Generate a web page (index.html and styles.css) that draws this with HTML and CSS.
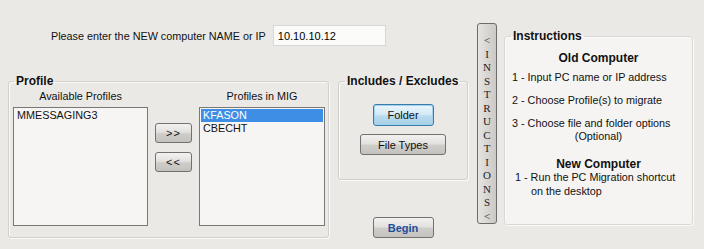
FILE: index.html
```html
<!DOCTYPE html>
<html lang="en">
<head>
    <meta charset="UTF-8">
    <title>PC Migration</title>
    <link rel="stylesheet" href="styles.css">
</head>
<body>
    <div class="form">
        <!-- sol taraf -->
        <div class="main">
            <div class="ask">
                <span>Please enter the NEW computer NAME or IP</span>
                <input class="ip" type="text" value="10.10.10.12">
            </div>

            <div class="groups">
                <fieldset class="profile">
                    <legend>Profile</legend>
                    <div class="col avail">
                        <div class="head">Available Profiles</div>
                        <div class="list">
                            <div class="item">MMESSAGING3</div>
                        </div>
                    </div>
                    <div class="moves">
                        <button class="btn small">&gt;&gt;</button>
                        <button class="btn small">&lt;&lt;</button>
                    </div>
                    <div class="col mig">
                        <div class="head">Profiles in MIG</div>
                        <div class="list">
                            <div class="item selected">KFASON</div>
                            <div class="item">CBECHT</div>
                        </div>
                    </div>
                </fieldset>

                <div class="side">
                    <fieldset class="incl">
                        <legend>Includes / Excludes</legend>
                        <button class="btn folder">Folder</button>
                        <button class="btn types">File Types</button>
                    </fieldset>
                    <button class="btn begin">Begin</button>
                </div>
            </div>
        </div>

        <!-- dikey buton -->
        <button class="vbtn">
            <span>&lt;</span><span>I</span><span>N</span><span>S</span><span>T</span><span>R</span><span>U</span><span>C</span><span>T</span><span>I</span><span>O</span><span>N</span><span>S</span><span>&lt;</span>
        </button>

        <!-- talimatlar -->
        <fieldset class="help">
            <legend>Instructions</legend>
            <div class="title">Old Computer</div>
            <div class="line first">1 - Input PC name or IP address</div>
            <div class="line">2 - Choose Profile(s) to migrate</div>
            <div class="line tight">3 - Choose file and folder options</div>
            <div class="opt">(Optional)</div>
            <div class="title second">New Computer</div>
            <div class="line run">1 - Run the PC Migration shortcut</div>
            <div class="line cont">on the desktop</div>
        </fieldset>
    </div>
</body>
</html>
```

FILE: styles.css
```css
body, html {
    margin: 0;
    padding: 0;
    background: #ebe9e6;
    font-family: "Liberation Sans", Arial, sans-serif;
    font-size: 10.8px;
    color: #111;
    overflow: hidden;
}

.form {
    display: flex;
    width: 704px;
    height: 249px;
}

/* Sol alan */
.main {
    width: 461px;
    padding-left: 8px;
    flex: none;
}

.ask {
    display: flex;
    align-items: center;
    margin-top: 25px;
    margin-left: 43px;
    gap: 7px;
}

.ip {
    width: 113px;
    height: 21px;
    box-sizing: border-box;
    border: 1px solid #d9d7d4;
    background: #fbfbfa;
    font-family: inherit;
    font-size: 11px;
    padding: 0 4px;
    margin: 0;
}

.groups {
    display: flex;
    margin-top: 28px;
}

fieldset {
    margin: 0;
    border: 1px solid #d2cfcc;
    border-radius: 3px;
    box-shadow: 1px 1px 0 #fbfaf9, inset 1px 1px 0 #fbfaf9;
}

legend {
    font-weight: bold;
    font-size: 12px;
    padding: 0 2px;
}

/* Profil grubu */
.profile {
    width: 321px;
    height: 164px;
    box-sizing: border-box;
    padding: 0 3px 0 4px;
    display: flex;
}

.profile legend {
    margin-left: 1px;
}

.col {
    display: flex;
    flex-direction: column;
}

.head {
    text-align: center;
    height: 18px;
    line-height: 14px;
    margin-top: 1px;
}

.avail .list {
    width: 135px;
}

.mig .list {
    width: 126px;
}

.list {
    height: 119px;
    box-sizing: border-box;
    border: 1px solid #7a7876;
    background: #f6f5f3;
    padding: 1px;
}

.item {
    height: 13px;
    line-height: 13px;
    padding-left: 2px;
}

.selected {
    background: #3d8ee4;
    color: #fff;
}

.moves {
    width: 51px;
    display: flex;
    flex-direction: column;
    align-items: center;
    padding-top: 35px;
    gap: 9px;
}

/* Butonlar */
.btn {
    box-sizing: border-box;
    border: 1px solid #737170;
    border-radius: 3px;
    background: linear-gradient(#f3f2f1 0%, #e3e1df 45%, #cfcdca 55%, #c4c2bf 100%);
    font-family: inherit;
    font-size: 11px;
    color: #111;
    padding: 0;
    margin: 0;
}

.small {
    width: 37px;
    height: 20px;
    letter-spacing: 1px;
}

.side {
    display: flex;
    flex-direction: column;
    align-items: center;
    margin-left: 9px;
}

.incl {
    width: 130px;
    height: 106px;
    box-sizing: border-box;
    padding: 0;
    display: flex;
    flex-direction: column;
    align-items: center;
}

.incl legend {
    margin-left: 6px;
}

.folder {
    width: 61px;
    height: 22px;
    margin-top: 16px;
    border-color: #3a7ba8;
    background: linear-gradient(#eaf5fb 0%, #d6ebf6 45%, #b9dcee 55%, #a9d0e6 100%);
    box-shadow: inset 0 0 0 1px #9fd2ee;
}

.types {
    width: 86px;
    height: 21px;
    margin-top: 8px;
}

.begin {
    width: 61px;
    height: 21px;
    margin-top: 37px;
    font-weight: bold;
    color: #1a4f9c;
}

/* Dikey buton */
.vbtn {
    flex: none;
    width: 20px;
    height: 201px;
    margin: 23px 0 0 8px;
    padding: 10px 0 0;
    box-sizing: border-box;
    border: 1px solid #6e6c6a;
    border-radius: 3px;
    background: linear-gradient(90deg, #e6e4e2, #cbc8c5);
    display: flex;
    flex-direction: column;
    align-items: center;
    font-family: "Liberation Serif", serif;
    font-size: 11px;
    color: #222;
}

.vbtn span {
    height: 14.1px;
    line-height: 13px;
}

/* Talimatlar */
.help {
    flex: none;
    width: 189px;
    height: 196px;
    box-sizing: border-box;
    margin: 29px 0 0 7px;
    padding: 0 0 0 7px;
    background: #f5f4f2;
    border-color: #dad7d4;
}

.help legend {
    margin-left: -1px;
}

.title {
    font-weight: bold;
    font-size: 12px;
    text-align: center;
    padding-right: 7px;
    margin-top: 8px;
    height: 16px;
}

.second {
    margin-top: 13px;
}

.line {
    margin-top: 5px;
    height: 18px;
    line-height: 18px;
}

.first {
    margin-top: 1px;
}

.tight {
    height: 14px;
    line-height: 14px;
    margin-top: 7px;
}

.opt {
    text-align: center;
    padding-right: 7px;
    height: 14px;
}

.run {
    margin-top: -3px;
    padding-left: 3px;
    height: 14px;
    line-height: 14px;
}

.cont {
    margin-top: 0;
    padding-left: 19px;
    height: 14px;
    line-height: 14px;
}
```
